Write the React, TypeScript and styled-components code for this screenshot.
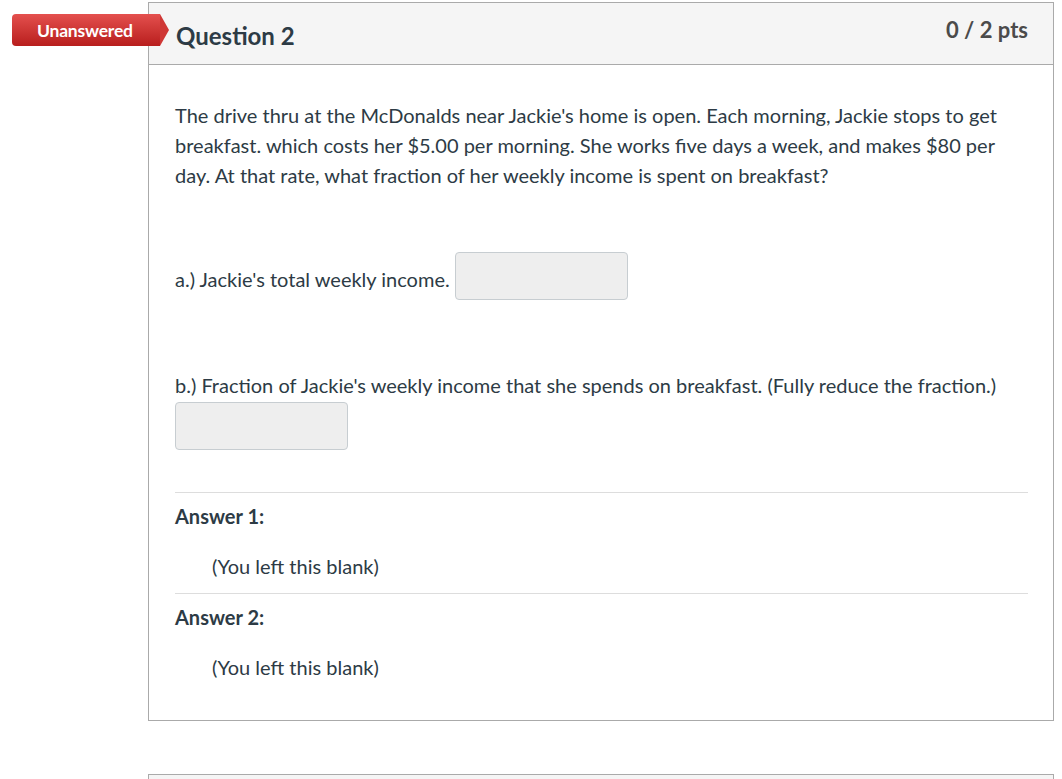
import React from 'react';
import styled, { createGlobalStyle } from 'styled-components';

const GlobalStyle = createGlobalStyle`
  html, body {
    margin: 0;
    padding: 0;
    background: #fff;
  }
  body {
    font-family: Lato, "Helvetica Neue", Arial, sans-serif;
    color: #2d3b45;
  }
`;

const Page = styled.div`
  position: relative;
  width: 1062px;
  height: 779px;
  overflow: hidden;
  padding-top: 2px;
  box-sizing: border-box;
`;

const QuestionCard = styled.div`
  position: relative;
  margin-left: 148px;
  width: 906px;
  box-sizing: border-box;
  border: 1px solid #aaaaaa;
  background: #fff;
`;

const NextCard = styled(QuestionCard)`
  margin-top: 53px;
  height: 60px;
  border-bottom: none;
  background: #f5f5f5;
`;

const Header = styled.div`
  display: flex;
  justify-content: space-between;
  align-items: flex-start;
  height: 62px;
  box-sizing: border-box;
  padding: 0 25px 0 27px;
  background: #f5f5f5;
  border-bottom: 1px solid #aaaaaa;
`;

const Title = styled.h2`
  margin: 18px 0 0;
  font-size: 24px;
  font-weight: 700;
  line-height: 30px;
  color: #2d3b45;
`;

const Points = styled.div`
  margin-top: 12px;
  font-size: 22px;
  font-weight: 700;
  line-height: 30px;
  color: #4b4b4b;
`;

const Badge = styled.div`
  position: absolute;
  left: -137px;
  top: 11px;
  width: 148px;
  height: 32px;
  box-sizing: border-box;
  padding-left: 25px;
  display: flex;
  align-items: center;
  border-radius: 4px 0 0 4px;
  background: linear-gradient(to bottom, #e4504e, #b81e1d);
  color: #fff;
  font-size: 17.5px;
  font-weight: 700;
  letter-spacing: -0.2px;

  &::after {
    content: '';
    position: absolute;
    right: -9px;
    top: 0;
    border-style: solid;
    border-width: 16px 0 16px 9px;
    border-color: transparent transparent transparent #cf3735;
  }
`;

const Body = styled.div`
  padding: 35px 25px 38px 26px;
  font-size: 20px;
  line-height: 30px;
`;

const Paragraph = styled.p`
  margin: 0;
`;

const InlineRow = styled.div`
  display: flex;
  align-items: flex-end;
  gap: 5px;
  margin-top: 62px;
`;

const Label = styled.span`
  padding-bottom: 6px;
`;

const BlankInput = styled.div`
  width: 173px;
  height: 48px;
  box-sizing: border-box;
  border: 1px solid #c7cdd1;
  border-radius: 4px;
  background: #eeeeee;
`;

const PromptB = styled.p`
  margin: 70px 0 2px;
`;

const AnswerBlock = styled.div`
  border-top: 1px solid #dddddd;
  margin-top: ${(p: { first?: boolean }) => (p.first ? '42px' : '12px')};
  padding-top: 10px;
`;

const AnswerLabel = styled.div`
  font-weight: 700;
  line-height: 26px;
`;

const AnswerText = styled.div`
  margin-top: 22px;
  padding-left: 37px;
  line-height: 30px;
`;

export default function App() {
  return (
    <>
      <GlobalStyle />
      <Page>
        <QuestionCard>
          <Badge>Unanswered</Badge>
          <Header>
            <Title>Question 2</Title>
            <Points>0 / 2 pts</Points>
          </Header>
          <Body>
            <Paragraph>
              The drive thru at the McDonalds near Jackie's home is open. Each morning, Jackie stops to get
              breakfast. which costs her $5.00 per morning. She works five days a week, and makes $80 per
              day. At that rate, what fraction of her weekly income is spent on breakfast?
            </Paragraph>
            <InlineRow>
              <Label>a.) Jackie's total weekly income.</Label>
              <BlankInput />
            </InlineRow>
            <PromptB>
              b.) Fraction of Jackie's weekly income that she spends on breakfast. (Fully reduce the fraction.)
            </PromptB>
            <BlankInput />
            <AnswerBlock first>
              <AnswerLabel>Answer 1:</AnswerLabel>
              <AnswerText>(You left this blank)</AnswerText>
            </AnswerBlock>
            <AnswerBlock>
              <AnswerLabel>Answer 2:</AnswerLabel>
              <AnswerText>(You left this blank)</AnswerText>
            </AnswerBlock>
          </Body>
        </QuestionCard>
        <NextCard />
      </Page>
    </>
  );
}
